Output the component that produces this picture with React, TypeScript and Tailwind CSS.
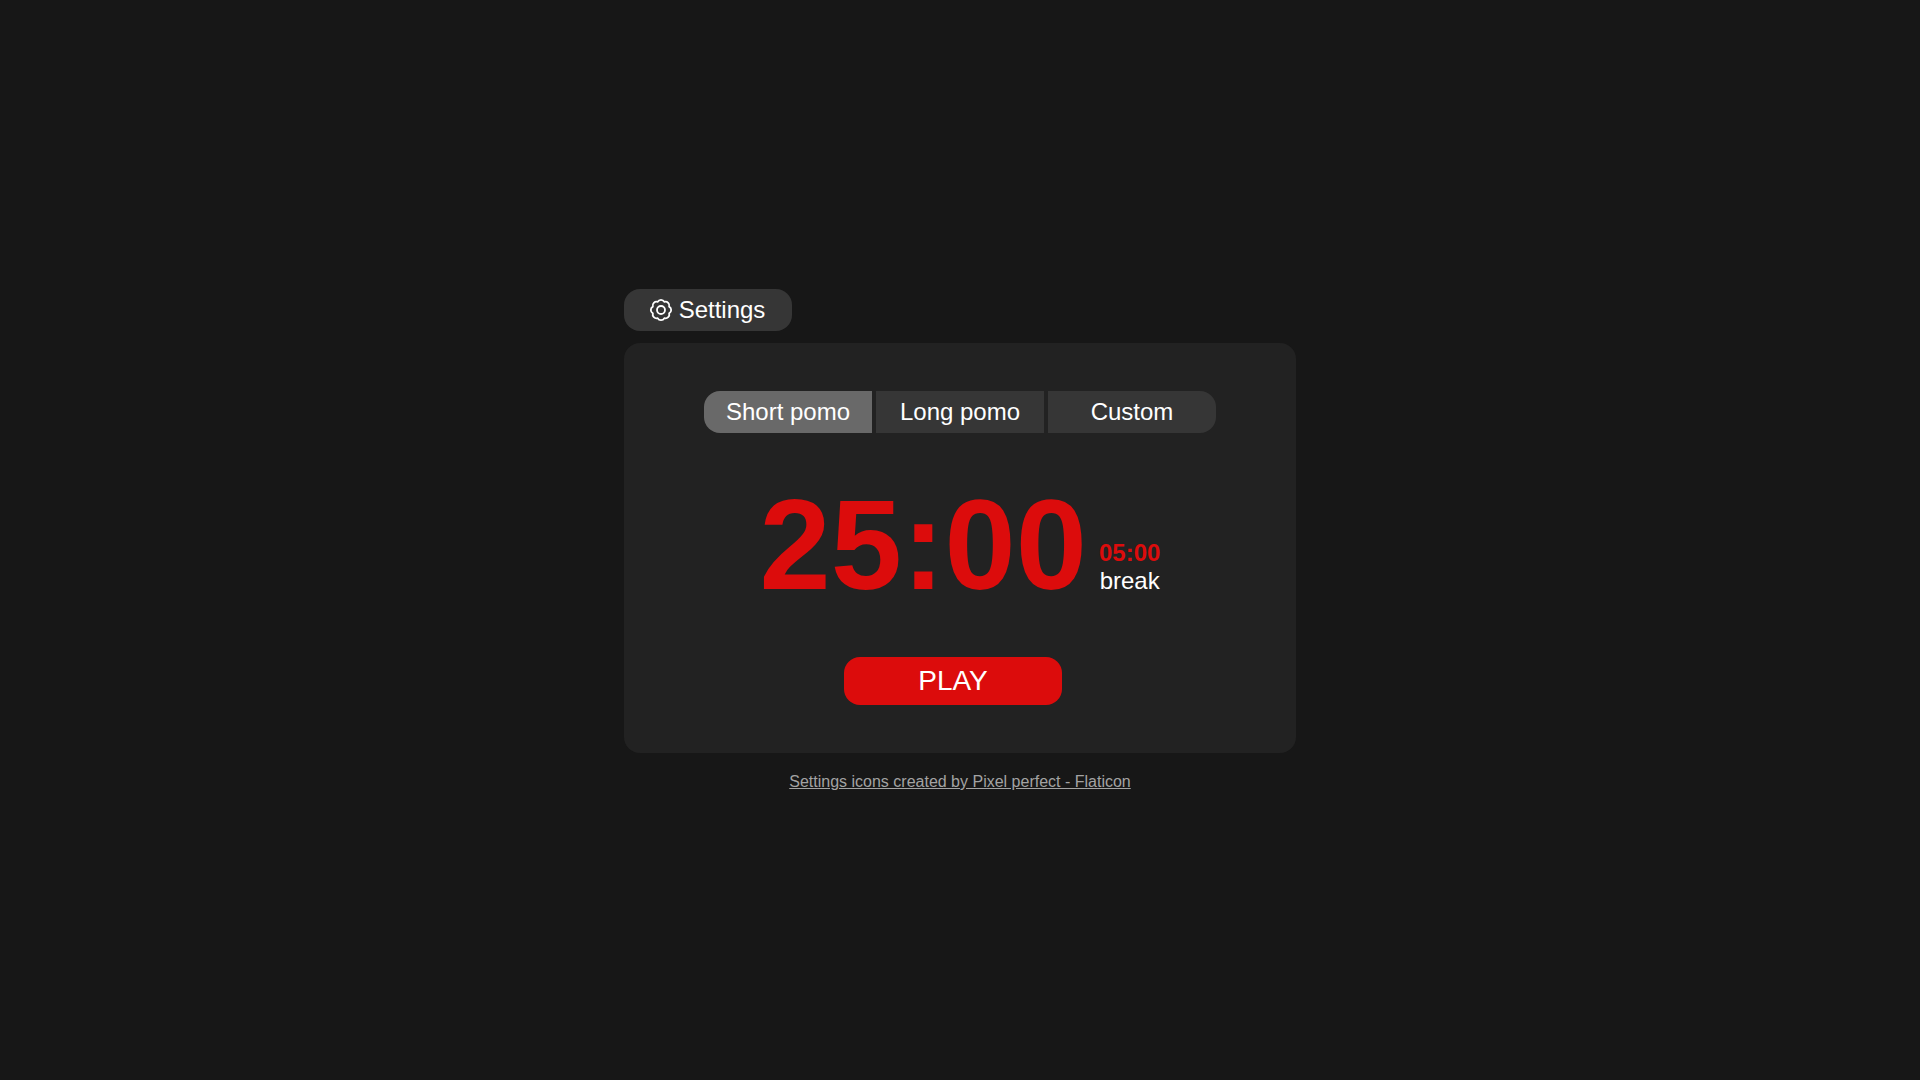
import { useState } from "react";

function GearIcon() {
  return (
    <svg
      viewBox="0 0 24 24"
      className="size-6 shrink-0"
      fill="none"
      stroke="currentColor"
      strokeWidth="1.8"
      strokeLinejoin="round"
      aria-hidden="true"
    >
      <path d="M8.63 3.87A3.8 3.8 0 0 1 15.37 3.87A3.8 3.8 0 0 1 20.13 8.63A3.8 3.8 0 0 1 20.13 15.37A3.8 3.8 0 0 1 15.37 20.13A3.8 3.8 0 0 1 8.63 20.13A3.8 3.8 0 0 1 3.87 15.37A3.8 3.8 0 0 1 3.87 8.63A3.8 3.8 0 0 1 8.63 3.87Z" />
      <circle cx="12" cy="12" r="4" />
    </svg>
  );
}

const modes = [
  { name: "Short pomo", time: "25:00", rest: "05:00" },
  { name: "Long pomo", time: "50:00", rest: "10:00" },
  { name: "Custom", time: "25:00", rest: "05:00" },
];

export default function App() {
  const [active, setActive] = useState(0);
  const mode = modes[active];

  return (
    <div className="flex min-h-screen flex-col items-center justify-center bg-[#171717] font-['Liberation_Sans',Arial,sans-serif] text-2xl text-white">
      <main className="flex w-full max-w-2xl flex-col gap-3">
        <button
          type="button"
          className="flex h-[42px] w-42 items-center justify-center gap-1.5 self-start rounded-2xl bg-[#363636] pr-0.5"
        >
          <GearIcon />
          Settings
        </button>

        <section className="flex flex-col items-center rounded-2xl bg-[#222222] px-20 py-12">
          <div className="grid w-full grid-cols-3 gap-1 overflow-hidden rounded-2xl">
            {modes.map((m, i) => (
              <button
                key={m.name}
                type="button"
                aria-pressed={i === active}
                onClick={() => setActive(i)}
                className={i === active ? "h-[42px] bg-[#696969]" : "h-[42px] bg-[#363636]"}
              >
                {m.name}
              </button>
            ))}
          </div>

          <div className="my-10 flex items-end gap-3 font-bold text-[#dc0c0c]">
            <p className="text-[128px] leading-36">{mode.time}</p>
            <p className="pb-[22px] text-center leading-7">
              {mode.rest}
              <span className="block font-normal text-white">break</span>
            </p>
          </div>

          <button
            type="button"
            className="mr-3.5 h-12 w-[218px] rounded-2xl bg-[#dc0c0c] text-[28px]"
          >
            PLAY
          </button>
        </section>

        <footer className="mt-2 text-center text-base leading-[18px]">
          <a href="#flaticon" className="text-[#a3a3a3] underline">
            Settings icons created by Pixel perfect - Flaticon
          </a>
        </footer>
      </main>
    </div>
  );
}
